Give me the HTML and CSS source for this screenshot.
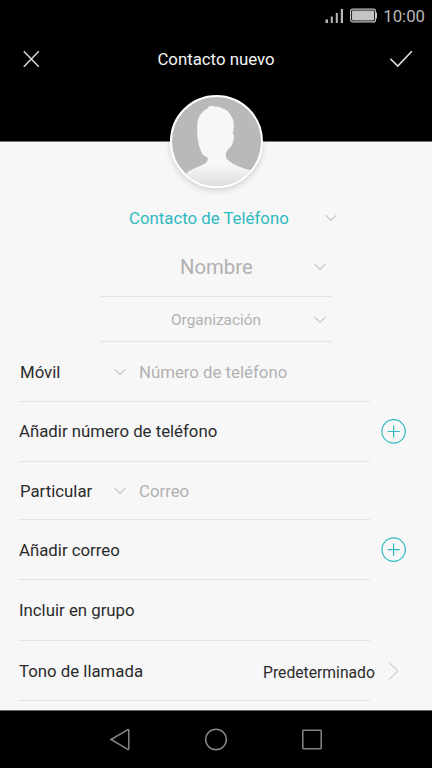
FILE: index.html
```html
<!DOCTYPE html>
<html lang="es">
<head>
<meta charset="utf-8">
<title>Contacto nuevo</title>
<link rel="stylesheet" href="styles.css">
</head>
<body>
<div class="screen">
  <header class="header">
    <div class="status">
      <svg class="signal" width="18" height="16" viewBox="0 0 18 16" fill="#b8b8b8"><path d="M.5 11.500H3V15H.5zM5.800 8.500h2V15h-2zM10.800 5h2v10h-2zM15.800 1H18v14h-2.200z"/></svg>
      <svg class="battery" width="27" height="15" viewBox="0 0 27 15"><rect x=".6" y="1.100" width="24.800" height="12.800" rx="2" fill="none" stroke="#c4c4c4" stroke-width="1.200"/><rect x="2" y="2.600" width="22" height="9.800" rx=".8" fill="#c4c4c4"/><path d="M25.500 4.500h1.500v6h-1.500z" fill="#c4c4c4"/></svg>
      <span class="clock">10:00</span>
    </div>
    <div class="titlebar">
      <svg class="close" width="18" height="18" viewBox="0 0 18 18" fill="none" stroke="#d8d8d8" stroke-width="1.500"><path d="M1.800 1.300l15 15.400M16.800 1.300l-15 15.400"/></svg>
      <h1 class="title">Contacto nuevo</h1>
      <svg class="check" width="24" height="18" viewBox="0 0 24 18" fill="none" stroke="#e0e0e0" stroke-width="1.600"><path d="M1.300 8.700l7.500 7.300L22.800 1.300"/></svg>
    </div>
    <div class="avatar">
      <svg width="90" height="90" viewBox="0 0 90 90">
        <defs><linearGradient id="body" x1="0" y1="0" x2="0" y2="1"><stop offset=".72" stop-color="#f7f7f7"/><stop offset="1" stop-color="#dedede"/></linearGradient></defs>
        <path fill="url(#body)" d="M14.500 80V76.300C17 73 25 70.500 30 68C35 65.800 36.500 63.500 35.500 60.500L31 58C27.500 52 25 43 25.300 33L25.300 27C26 20 29 14.500 35.500 11.500C36 9 40 7.800 42.500 9.500C47 8.800 50 11.500 53 12.500C57 14 59.500 19 61 22.500C62.500 28 61.800 32 60.800 37L62 38.200C61.500 46 59.500 50 56 52.500C53.500 55.500 53 60 55.500 62.500C60.500 67.500 69 70.500 78.500 73.300L90 90H14.500z"/>
      </svg>
    </div>
  </header>
  <main class="form">
    <div class="account"><span>Contacto de Teléfono</span><svg class="chev" viewBox="0 0 12 8"><path d="M.8 1.200L6 6.400l5.200-5.200"/></svg></div>
    <div class="field name"><span>Nombre</span><svg class="chev" viewBox="0 0 12 8"><path d="M.8 1.200L6 6.400l5.200-5.200"/></svg></div>
    <div class="field org"><span>Organización</span><svg class="chev" viewBox="0 0 12 8"><path d="M.8 1.200L6 6.400l5.200-5.200"/></svg></div>
    <div class="row phone"><div class="cell"><span class="kind">Móvil</span><svg class="chev" viewBox="0 0 12 8"><path d="M.8 1.200L6 6.400l5.200-5.200"/></svg><span class="hint">Número de teléfono</span></div></div>
    <div class="row add-phone"><div class="cell"><span>Añadir número de teléfono</span></div><svg class="plus" viewBox="0 0 26 26"><circle cx="12.600" cy="12.400" r="11.700"/><path d="M12.600 6.400v12.200M6.600 12.500h12.200"/></svg></div>
    <div class="row mail"><div class="cell"><span class="kind">Particular</span><svg class="chev" viewBox="0 0 12 8"><path d="M.8 1.200L6 6.400l5.200-5.200"/></svg><span class="hint">Correo</span></div></div>
    <div class="row add-mail"><div class="cell"><span>Añadir correo</span></div><svg class="plus" viewBox="0 0 26 26"><circle cx="12.600" cy="12.600" r="11.700"/><path d="M12.600 6.600v12.200M6.600 12.600h12.200"/></svg></div>
    <div class="row group"><div class="cell"><span>Incluir en grupo</span></div></div>
    <div class="row tone"><div class="cell"><span>Tono de llamada</span></div><span class="value">Predeterminado</span><svg class="more" viewBox="0 0 10 18"><path d="M.4.800L8.800 9 .4 17.200"/></svg></div>
  </main>
  <nav class="nav">
    <svg width="22" height="24" viewBox="0 0 22 24"><path d="M2 11.500L18.800 1.700q1-.4 1 .6v18.400q0 1-1 .6z"/></svg>
    <svg width="24" height="24" viewBox="0 0 24 24"><circle cx="12" cy="11.500" r="10.300"/></svg>
    <svg width="22" height="22" viewBox="0 0 22 22"><rect x="1.800" y="1.300" width="18.400" height="18.400" rx=".6"/></svg>
  </nav>
</div>
</body>
</html>
```
FILE: styles.css
```css
* { box-sizing: border-box; }
body { margin: 0; background: #000; font-family: Roboto, "Liberation Sans", sans-serif; font-size: 16.8px; color: #2b2b2b; }
svg { display: block; flex: none; }
.screen { width: 432px; height: 768px; display: flex; flex-direction: column; overflow: hidden; white-space: nowrap; }
.header { position: relative; height: 142px; background: #000; border-bottom: 1px solid #747474; flex: none; }
.status { display: flex; align-items: center; height: 31px; padding: 0 7px 0 325px; color: #b8b8b8; }
.battery { margin-left: 7px; }
.clock { margin-left: auto; font-size: 16.8px; }
.titlebar { display: flex; align-items: center; height: 56px; padding: 0 19px 0 22px; }
.title { flex: 1; margin: 0; padding-left: 11px; padding-right: 8px; text-align: center; font-size: 16.8px; font-weight: 400; color: #f4f4f4; }
.avatar { position: absolute; left: 170px; top: 95px; width: 93px; height: 93px; border: 2px solid #fff; border-radius: 50%; background: #b9b9b9; overflow: hidden; box-shadow: 0 3px 6px rgba(0, 0, 0, .14); }
.form { height: 568px; background: #f7f7f7; flex: none; }
.chev { width: 12px; height: 8px; fill: none; stroke: #a6a6a6; stroke-width: 1; }
.account { display: flex; align-items: center; justify-content: space-between; height: 96px; width: 208px; margin-left: 129px; padding-top: 55px; color: #2fb9c0; }
.field { display: flex; align-items: center; justify-content: space-between; width: 232px; margin-left: 100px; padding-right: 6px; border-bottom: 1px solid #e4e4e4; color: #b1b1b1; }
.name { height: 59px; padding-left: 80px; font-size: 20.3px; }
.org { height: 45px; padding-top: 1px; padding-left: 71px; font-size: 15.4px; }
.row { display: flex; align-items: center; height: 60px; padding-left: 19px; }
.cell { display: flex; align-items: center; width: 351px; height: 100%; border-bottom: 1px solid #e4e4e4; flex: none; }
.kind { width: 95px; padding-left: 1px; }
.hint { margin-left: 13px; color: #b1b1b1; font-size: 16.8px; }
.phone .cell { padding-top: 1px; }
.add-phone .cell { padding-bottom: 1px; }
.mail { height: 58px; }
.group { height: 61px; }
.plus { width: 26px; height: 26px; margin-left: 11px; fill: none; stroke: #31b9bf; stroke-width: 1.200; }
.value { margin-left: -107px; padding-top: 2px; font-size: 15.7px; }
.more { width: 10px; height: 18px; margin-left: 14px; fill: none; stroke: #b5b5b5; stroke-width: 1; }
.nav { display: flex; align-items: center; justify-content: space-between; height: 58px; padding: 0 109px; background: #000; border-top: 1px solid #666; }
.nav svg { fill: none; stroke: #858585; stroke-width: 1.500; }
```
